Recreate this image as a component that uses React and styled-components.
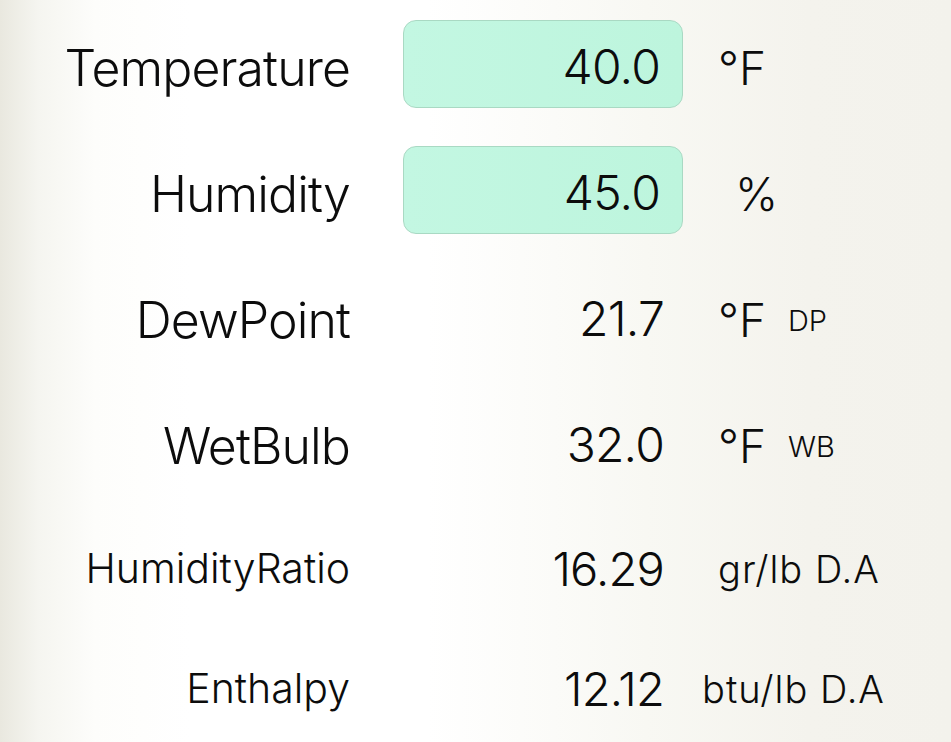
import styled, { createGlobalStyle } from 'styled-components'

const GlobalStyle = createGlobalStyle`
  html, body {
    margin: 0;
    padding: 0;
  }
  body {
    width: 951px;
    height: 742px;
    overflow: hidden;
    font-family: Inter, "Noto Sans", sans-serif;
    color: #0c0c0c;
    background: linear-gradient(
      90deg,
      #e9e8df 0%,
      #f5f5f0 4%,
      #fdfdfb 10%,
      #ffffff 20%,
      #ffffff 45%,
      #f8f8f3 68%,
      #f4f3ed 85%,
      #f3f2ec 100%
    );
  }
`

const rows = [
  { label: 'Temperature', value: '40.0', unit: '°F', input: true, offset: 35 },
  { label: 'Humidity', value: '45.0', unit: '%', input: true, offset: 52 },
  { label: 'DewPoint', value: '21.7', unit: '°F', tag: 'DP', offset: 35 },
  { label: 'WetBulb', value: '32.0', unit: '°F', tag: 'WB', offset: 35 },
  { label: 'HumidityRatio', value: '16.29', unit: 'gr/lb D.A', small: true, offset: 35 },
  { label: 'Enthalpy', value: '12.12', unit: 'btu/lb D.A', small: true, offset: 19 },
]

const App = () => {
  return (
    <>
      <GlobalStyle />
      <Sheet>
        {rows.map((row) => (
          <Row key={row.label} $small={row.small}>
            <Label $small={row.small}>{row.label}</Label>
            <ValueCell $input={row.input}>
              <Value $small={row.small}>{row.value}</Value>
            </ValueCell>
            <Unit $offset={row.offset}>
              <UnitText $small={row.small}>{row.unit}</UnitText>
              {row.tag && <Tag>{row.tag}</Tag>}
            </Unit>
          </Row>
        ))}
      </Sheet>
    </>
  )
}

const Sheet = styled.div`
  display: flex;
  flex-direction: column;
  padding-top: 1px;
`

const Row = styled.div`
  display: grid;
  grid-template-columns: 403px 280px 1fr;
  align-items: center;
  height: ${(p) => (p.$small ? '120px' : '126px')};
`

const Label = styled.div`
  box-sizing: border-box;
  padding-right: 53px;
  padding-top: ${(p) => (p.$small ? '6px' : '8px')};
  text-align: right;
  font-size: ${(p) => (p.$small ? '41px' : '50px')};
  letter-spacing: ${(p) => (p.$small ? '0' : '-0.9px')};
  font-weight: 350;
  line-height: 1;
`

const ValueCell = styled.div`
  height: 88px;
  box-sizing: border-box;
  display: flex;
  align-items: center;
  justify-content: flex-end;
  padding-right: ${(p) => (p.$input ? '22px' : '18px')};
  padding-top: 6px;
  border-radius: 13px;
  background: ${(p) => (p.$input ? 'linear-gradient(90deg, #c3f7e2, #bdf5dd)' : 'transparent')};
  border: 1px solid ${(p) => (p.$input ? '#a9d9c3' : 'transparent')};
`

const Value = styled.span`
  font-size: ${(p) => (p.$small ? '47px' : '48px')};
  font-weight: 350;
  letter-spacing: -0.8px;
  line-height: 1;
`

const Unit = styled.div`
  display: flex;
  align-items: baseline;
  gap: 22px;
  padding-left: ${(p) => p.$offset}px;
  padding-top: 8px;
  white-space: nowrap;
`

const UnitText = styled.span`
  font-size: ${(p) => (p.$small ? '38px' : '46px')};
  font-weight: 350;
  letter-spacing: ${(p) => (p.$small ? '1px' : '0')};
  line-height: 1;
`

const Tag = styled.span`
  font-size: 29px;
  font-weight: 350;
  line-height: 1;
  position: relative;
  top: -6px;
`

export default App
